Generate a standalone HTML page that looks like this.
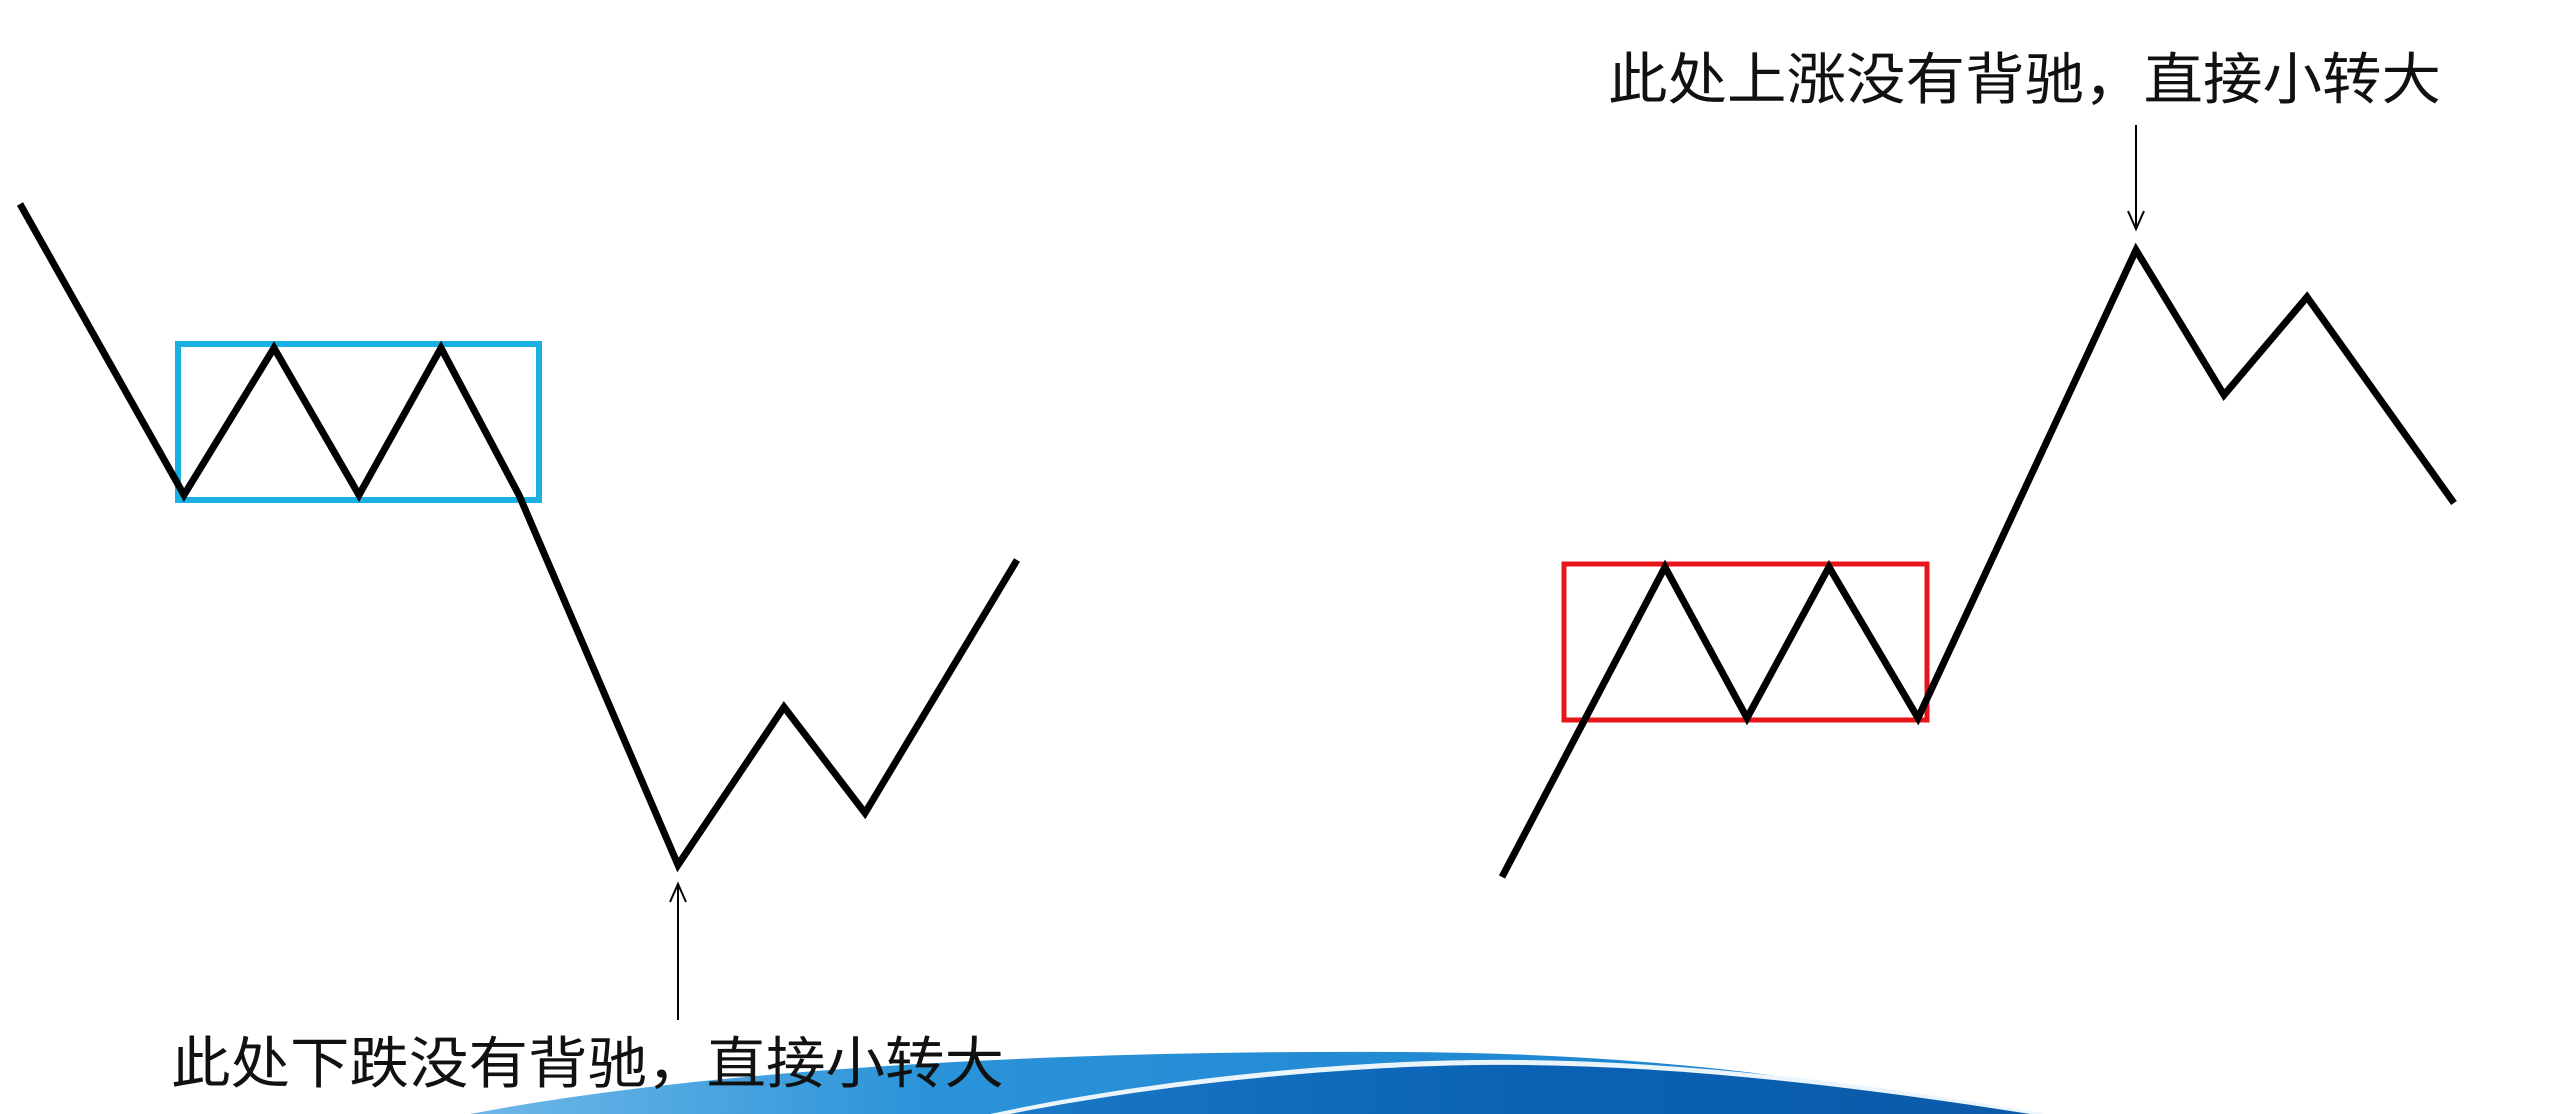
<!DOCTYPE html>
<html><head><meta charset="utf-8"><style>
html,body{margin:0;padding:0;background:#fff;}
svg{display:block;}
text{font-family:"Liberation Sans","Noto Sans CJK SC",sans-serif;font-size:56px;fill:#111;}
</style></head><body>
<svg width="2560" height="1114" viewBox="0 0 2560 1114" xmlns="http://www.w3.org/2000/svg">
<defs>
<linearGradient id="g1" x1="0" y1="0" x2="1" y2="0">
<stop offset="0" stop-color="#6fb8e8"/><stop offset="0.3" stop-color="#2a93d8"/><stop offset="1" stop-color="#1a7fcf"/>
</linearGradient>
<linearGradient id="g2" x1="0" y1="0" x2="1" y2="0">
<stop offset="0" stop-color="#1a78c8"/><stop offset="0.5" stop-color="#0a62b4"/><stop offset="1" stop-color="#0b5aa8"/>
</linearGradient>
</defs>
<!-- swoosh -->
<path d="M470 1114 C700 1070 1050 1050 1400 1052 C1600 1053 1800 1070 1990 1114 Z" fill="url(#g1)"/>
<path d="M990 1114 C1150 1080 1350 1058 1520 1060 C1700 1062 1880 1085 2045 1114 Z" fill="#eaf4fb"/>
<path d="M1010 1114 C1160 1084 1360 1063 1525 1065 C1700 1067 1870 1089 2030 1114 Z" fill="url(#g2)"/>
<!-- left chart -->
<rect x="178" y="344" width="361" height="156" fill="none" stroke="#1ab0e4" stroke-width="6"/>
<polyline points="20,204 184,495 274,348 359,495 441,348 519,495 678,865 784,707 865,813 1017,560" fill="none" stroke="#000" stroke-width="7" stroke-linejoin="miter"/>
<line x1="678" y1="884" x2="678" y2="1020" stroke="#000" stroke-width="2"/>
<polyline points="670,902 678,884 686,902" fill="none" stroke="#000" stroke-width="2"/>
<text x="171" y="1083" textLength="833" lengthAdjust="spacingAndGlyphs">此处下跌没有背驰，直接小转大</text>
<!-- right chart -->
<rect x="1564" y="564" width="363" height="156" fill="none" stroke="#e8161b" stroke-width="5"/>
<polyline points="1502,877 1665,567 1747,718 1829,567 1918,718 2136,250 2224,395 2307,297 2454,503" fill="none" stroke="#000" stroke-width="7"/>
<line x1="2136" y1="125" x2="2136" y2="229" stroke="#000" stroke-width="2"/>
<polyline points="2128,211 2136,229 2144,211" fill="none" stroke="#000" stroke-width="2"/>
<text x="1608" y="99" textLength="833" lengthAdjust="spacingAndGlyphs">此处上涨没有背驰，直接小转大</text>
</svg>
</body></html>
